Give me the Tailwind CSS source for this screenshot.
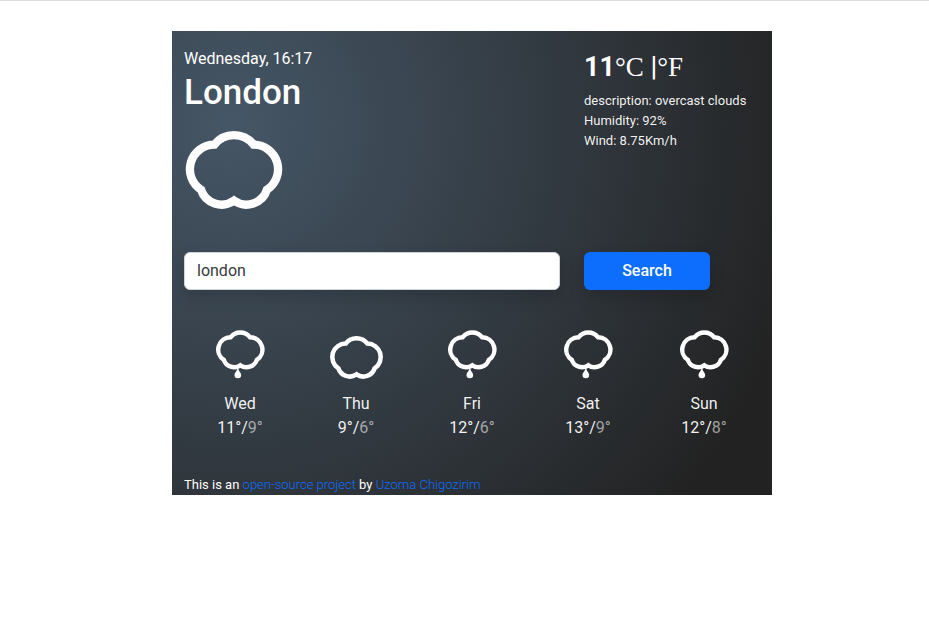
<!DOCTYPE html>
<html lang="en">
<head>
<meta charset="utf-8">
<title>Weather</title>
<script src="https://cdn.jsdelivr.net/npm/@tailwindcss/browser@4"></script>
</head>
<body class="border-t border-[#dcdcdc] bg-white pl-[15px] font-[Roboto,sans-serif] text-base text-white">
<svg class="hidden" aria-hidden="true">
  <symbol id="cloud" viewBox="36 270 300 300">
    <path d="M127 344A75 75 0 0 1 245 344A73.5 73.5 0 0 1 285 479A65 65 0 0 1 186 512A65 65 0 0 1 87 479A73.5 73.5 0 0 1 127 344Z" fill="none" stroke="currentColor" stroke-width="25"/>
  </symbol>
  <symbol id="rain" viewBox="34 300 300 300">
    <path d="M127 344A75 75 0 0 1 245 344A73.5 73.5 0 0 1 285 479A65 65 0 0 1 186 512A65 65 0 0 1 87 479A73.5 73.5 0 0 1 127 344Z" fill="none" stroke="currentColor" stroke-width="27"/>
    <path d="M171 520C168 547 151 555 151 570A20 20 0 0 0 191 570C191 555 174 547 171 520Z" fill="currentColor"/>
  </symbol>
</svg>
<main class="mx-auto mt-[30px] w-full max-w-[600px] bg-[radial-gradient(circle_at_10%_20%,#455666_0%,#222222_90%)]">
  <div class="grid grid-cols-3 gap-x-6 px-3 pt-4">
    <header class="col-span-2">
      <p class="leading-6">Wednesday, 16:17</p>
      <h1 class="text-[35px] leading-[43px] font-medium">London</h1>
      <svg class="mt-1.5 size-[100px]" role="img" aria-label="overcast clouds"><use href="#cloud"/></svg>
    </header>
    <section class="text-[13px] leading-5 text-white/95">
      <p class="mb-1 text-[27px] leading-10 font-medium text-white"><strong class="font-bold">11</strong><a href="#" class="font-['Liberation_Serif',serif] font-normal">°C</a> |<a href="#" class="font-['Liberation_Serif',serif] font-normal">°F</a></p>
      <p>description: overcast clouds</p>
      <p>Humidity: 92%</p>
      <p>Wind: 8.75Km/h</p>
    </section>
  </div>
  <form class="mt-8 grid grid-cols-3 gap-x-6 px-3">
    <input type="search" aria-label="City" value="london" class="col-span-2 h-[38px] rounded-md border border-[#ced4da] bg-white px-3 pb-0.5 text-[#343a40] shadow-[0_8px_16px_rgba(0,0,0,0.15)]">
    <button type="button" class="mr-[50px] h-[38px] rounded-md bg-[#0d6efd] font-medium shadow-[0_8px_16px_rgba(0,0,0,0.15)]">Search</button>
  </form>
  <section class="mt-9 grid grid-cols-5 px-2.5 text-center leading-6" aria-label="Forecast">
    <div><div class="flex h-[54px] items-start justify-center pt-1"><svg class="size-[50px]"><use href="#rain"/></svg></div><p class="mt-3 text-white/95">Wed</p><p class="text-white/95">11°/<span class="opacity-60">9°</span></p></div>
    <div><div class="flex h-[54px] items-start justify-center pt-1"><svg class="size-[55px]"><use href="#cloud"/></svg></div><p class="mt-3 text-white/95">Thu</p><p class="text-white/95">9°/<span class="opacity-60">6°</span></p></div>
    <div><div class="flex h-[54px] items-start justify-center pt-1"><svg class="size-[50px]"><use href="#rain"/></svg></div><p class="mt-3 text-white/95">Fri</p><p class="text-white/95">12°/<span class="opacity-60">6°</span></p></div>
    <div><div class="flex h-[54px] items-start justify-center pt-1"><svg class="size-[50px]"><use href="#rain"/></svg></div><p class="mt-3 text-white/95">Sat</p><p class="text-white/95">13°/<span class="opacity-60">9°</span></p></div>
    <div><div class="flex h-[54px] items-start justify-center pt-1"><svg class="size-[50px]"><use href="#rain"/></svg></div><p class="mt-3 text-white/95">Sun</p><p class="text-white/95">12°/<span class="opacity-60">8°</span></p></div>
  </section>
  <footer class="px-3 pt-[35px] text-[13px] leading-5">This is an <a href="#" class="font-light text-[#0d6efd]">open-source project</a> by <a href="#" class="font-light text-[#0d6efd]">Uzoma Chigozirim</a></footer>
</main>
</body>
</html>
